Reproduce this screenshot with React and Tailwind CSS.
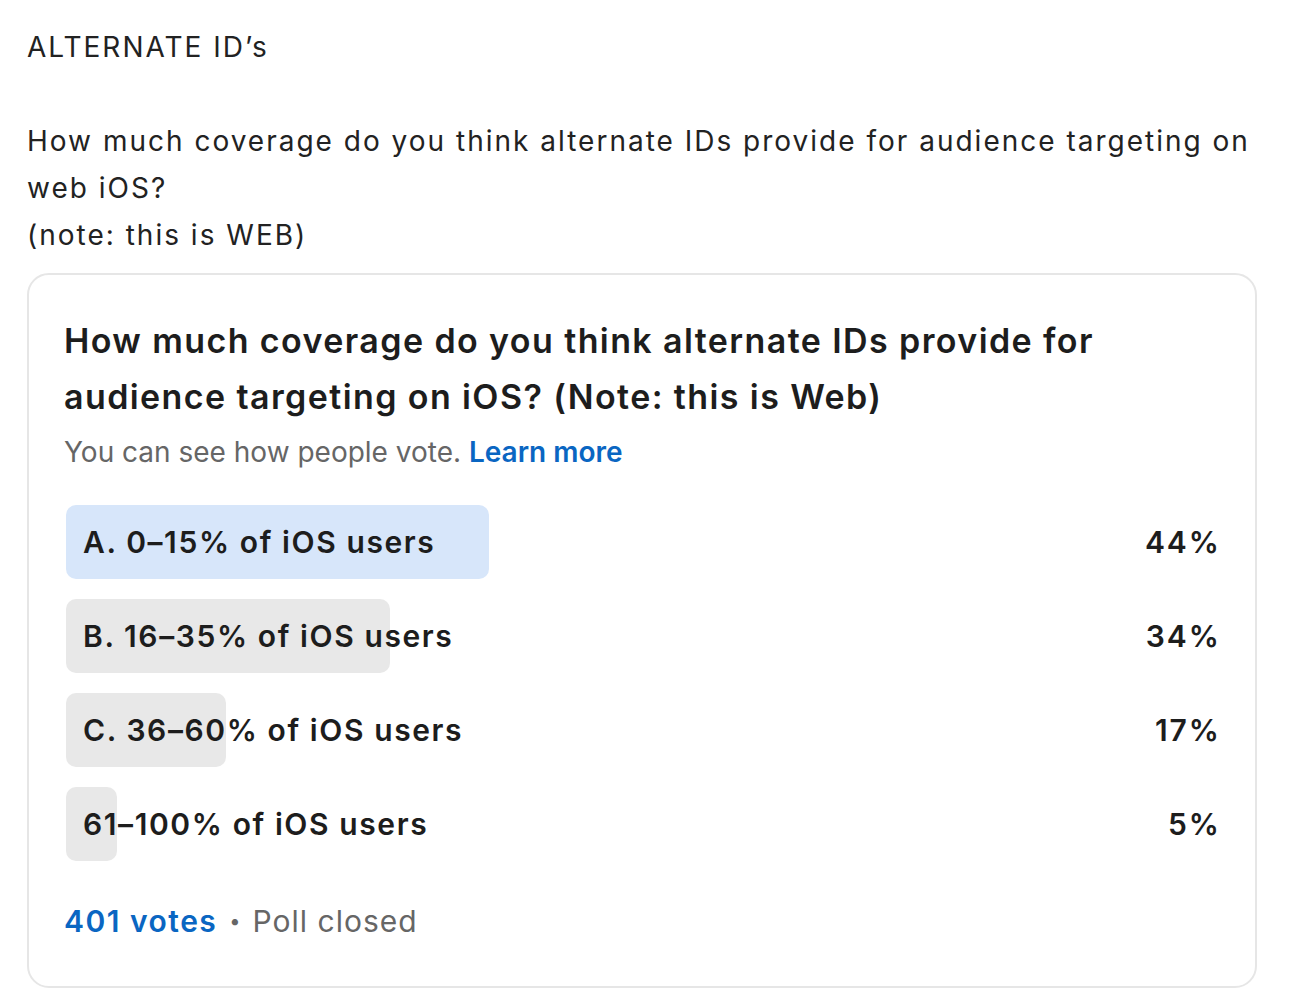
import React from "react";

const options = [
  { label: "A. 0–15% of iOS users", pct: 44, barClass: "w-[423px] bg-[#d7e6fa]" },
  { label: "B. 16–35% of iOS users", pct: 34, barClass: "w-[324px] bg-[#e8e8e8]" },
  { label: "C. 36–60% of iOS users", pct: 17, barClass: "w-[160px] bg-[#e8e8e8]" },
  { label: "61–100% of iOS users", pct: 5, barClass: "w-[51px] bg-[#e8e8e8]" },
];

const PollOption = ({ label, pct, barClass }) => (
  <div className="flex items-center">
    <div className="relative flex-1 h-[74px] flex items-center">
      <div className={`absolute left-0 top-0 h-full rounded-[10px] ${barClass}`} />
      <span className="relative pl-[17px] text-[30px] font-semibold tracking-[1.6px] text-[#1d1d1d]">
        {label}
      </span>
    </div>
    <span className="text-[30px] font-semibold tracking-[2px] text-[#1d1d1d]">{pct}%</span>
  </div>
);

export default function App() {
  return (
    <div
      className="min-h-screen bg-white pl-[27px] pr-[35px] pt-[24px]"
      style={{ fontFamily: "Inter, 'Noto Sans', sans-serif" }}
    >
      <div className="text-[28px] leading-[47px] tracking-[2px] text-[#222]">
        <p>ALTERNATE ID’s</p>
        <p>&nbsp;</p>
        <p>
          How much coverage do you think alternate IDs provide for audience targeting on web iOS?
        </p>
        <p>(note: this is WEB)</p>
      </div>

      <div className="mt-[14px] rounded-[22px] border-2 border-[#e6e6e6] pl-[35px] pr-[34px] pt-[38px] pb-[45px]">
        <h2 className="text-[34px] leading-[56px] font-semibold tracking-[1.4px] text-[#1d1d1d]">
          How much coverage do you think alternate IDs provide for audience targeting on iOS? (Note: this is Web)
        </h2>
        <p className="mt-[7px] text-[28px] leading-[40px] text-[#666]">
          You can see how people vote.{" "}
          <a href="#" className="font-semibold text-[#0a66c2]">
            Learn more
          </a>
        </p>

        <div className="mt-[33px] ml-[2px] flex flex-col gap-[20px]">
          {options.map((o) => (
            <PollOption key={o.label} {...o} />
          ))}
        </div>

        <div className="mt-[40px] flex items-center gap-[12px] text-[30px] leading-[40px]">
          <span className="font-semibold tracking-[1.5px] text-[#0a66c2]">401 votes</span>
          <span className="text-[#666] text-[20px]">•</span>
          <span className="tracking-[1px] text-[#666]">Poll closed</span>
        </div>
      </div>
    </div>
  );
}
